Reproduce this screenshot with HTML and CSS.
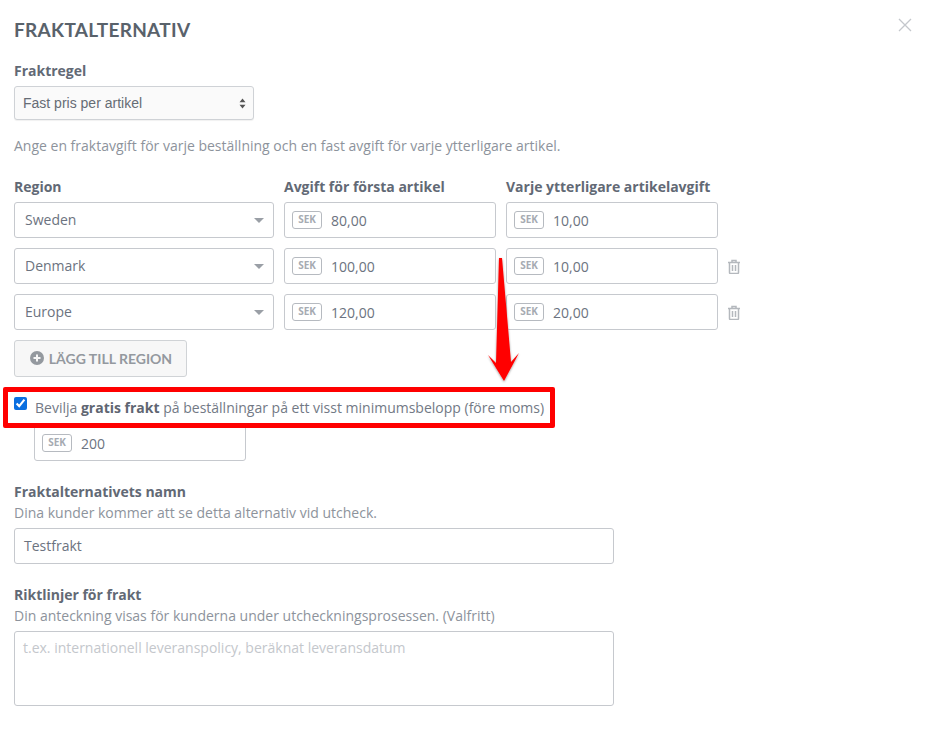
FILE: index.html
```html
<!DOCTYPE html>
<html lang="sv">
<head>
<meta charset="utf-8">
<title>Fraktalternativ</title>
<link rel="stylesheet" href="styles.css">
</head>
<body>
<main class="modal">
  <header class="head">
    <h1 class="title">FRAKTALTERNATIV</h1>
    <svg class="close" width="14" height="14" viewBox="0 0 14 14"><path d="M1 1l12 12M13 1L1 13" stroke="#c4c7cc" stroke-width="1.3" fill="none"/></svg>
  </header>

  <label class="label rule-label">Fraktregel</label>
  <div class="native-select">
    <span>Fast pris per artikel</span>
    <svg width="7" height="11" viewBox="0 0 7 11"><path d="M3.5 0.5L6.5 4.2H0.5zM3.5 10.5L0.5 6.8H6.5z" fill="#555"/></svg>
  </div>
  <p class="hint intro">Ange en fraktavgift för varje beställning och en fast avgift för varje ytterligare artikel.</p>

  <div class="grid">
    <div class="label">Region</div>
    <div class="label">Avgift för första artikel</div>
    <div class="label">Varje ytterligare artikelavgift</div>
    <div></div>

    <div class="dropdown"><span>Sweden</span><i class="caret"></i></div>
    <div class="money"><b class="sek">SEK</b><span>80,00</span></div>
    <div class="money"><b class="sek">SEK</b><span>10,00</span></div>
    <div></div>

    <div class="dropdown"><span>Denmark</span><i class="caret"></i></div>
    <div class="money"><b class="sek">SEK</b><span>100,00</span></div>
    <div class="money"><b class="sek">SEK</b><span>10,00</span></div>
    <svg class="trash" width="14" height="15" viewBox="0 0 14 15"><path d="M1 3.500h12M5 3.500V1.500h4v2M2.500 3.500v10a1 1 0 0 0 1 1h7a1 1 0 0 0 1-1v-10M5.500 6v6M8.500 6v6" stroke="#b4b8bd" stroke-width="1.500" fill="none"/></svg>

    <div class="dropdown"><span>Europe</span><i class="caret"></i></div>
    <div class="money"><b class="sek">SEK</b><span>120,00</span></div>
    <div class="money"><b class="sek">SEK</b><span>20,00</span></div>
    <svg class="trash" width="14" height="15" viewBox="0 0 14 15"><path d="M1 3.500h12M5 3.500V1.500h4v2M2.500 3.500v10a1 1 0 0 0 1 1h7a1 1 0 0 0 1-1v-10M5.500 6v6M8.500 6v6" stroke="#b4b8bd" stroke-width="1.500" fill="none"/></svg>
  </div>

  <button class="add" type="button">
    <svg width="14" height="14" viewBox="0 0 14 14"><circle cx="7" cy="7" r="7" fill="#94999f"/><path d="M7 3.500v7M3.500 7h7" stroke="#f7f7f7" stroke-width="2"/></svg>
    LÄGG TILL REGION
  </button>

  <label class="check-row">
    <input type="checkbox" checked>
    <span>Bevilja <b>gratis frakt</b> på beställningar på ett visst minimumsbelopp (före moms)</span>
  </label>
  <div class="money min"><b class="sek">SEK</b><span>200</span></div>

  <div class="label name-label">Fraktalternativets namn</div>
  <p class="hint sub">Dina kunder kommer att se detta alternativ vid utcheck.</p>
  <div class="text-input">Testfrakt</div>

  <div class="label notes-label">Riktlinjer för frakt</div>
  <p class="hint sub">Din anteckning visas för kunderna under utcheckningsprosessen. (Valfritt)</p>
  <div class="textarea">t.ex. internationell leveranspolicy, beräknat leveransdatum</div>
</main>

<div class="red-box"></div>
<svg class="arrow" width="44" height="130" viewBox="0 0 44 130">
  <defs><filter id="s" x="-30%" y="-5%" width="160%" height="115%"><feDropShadow dx="0" dy="1" stdDeviation="1.200" flood-color="#000" flood-opacity=".4"/></filter></defs>
  <path d="M15 2L18 2L27 106L35 97L20 125L4 99L12 107Z" fill="#f00" filter="url(#s)"/>
</svg>
</body>
</html>
```
FILE: styles.css
```css
* { box-sizing: border-box; }
html, body { margin: 0; height: 100%; overflow: hidden; background: #fff; }
body { font-family: "Open Sans", sans-serif; font-size: 14px; color: #6c7380; position: relative; }
.modal { padding: 0 14px; display: flex; flex-direction: column; align-items: flex-start; }
.head { width: 100%; height: 59px; display: flex; justify-content: space-between; align-items: flex-start; }
.title { margin: 18px 0 0; font: 700 19px/23px Lato, sans-serif; letter-spacing: .3px; color: #59626b; }
.close { margin: 18px 1px 0 0; }
.label { font-weight: 700; font-size: 14px; line-height: 19px; letter-spacing: -.01px; color: #626975; }
.rule-label { margin-top: 2px; }
.native-select { margin-top: 6px; width: 240px; height: 34px; border: 1px solid #cfd2d6; border-radius: 3px; background: #fafafa; padding: 0 8px; display: flex; align-items: center; justify-content: space-between; font: 14px "Liberation Sans", sans-serif; color: #666c75; box-shadow: 0 1px 1px rgba(0,0,0,.06); }
.native-select svg { margin-right: -1px; }
.hint { margin: 0; color: #8d939c; font-size: 14px; line-height: 19px; }
.intro { margin-top: 16px; }
.grid { margin-top: 22px; display: grid; grid-template-columns: 260px 212px 212px 14px; column-gap: 10px; row-gap: 10px; align-items: center; }
.grid > .label { margin-bottom: -4px; }
.dropdown, .money, .text-input, .textarea { border: 1px solid #c6c9ce; border-radius: 3px; background: #fff; }
.dropdown { height: 36px; padding: 0 10px 2px; display: flex; align-items: center; justify-content: space-between; }
.caret { width: 0; height: 0; border: 5.500px solid transparent; border-top: 5.500px solid #9a9fa6; border-bottom: 0; margin: 2px -1px 0 0; }
.money { height: 36px; display: flex; align-items: center; padding: 0 7px; gap: 9px; font-size: 14px; color: #6c7380; }
.sek { border: 1px solid #b6bac0; border-radius: 3px; width: 30px; height: 18px; font-size: 10px; line-height: 15px; color: #a6abb2; text-align: center; font-weight: 700; }
.trash { margin-left: -1px; margin-top: 1px; }
.add { margin-top: 10px; width: 173px; height: 37px; border: 1px solid #d0d3d6; border-radius: 3px; background: #f7f7f7; padding: 0 0 1px 1px; display: flex; align-items: center; justify-content: center; gap: 5px; font: 700 14px Lato, sans-serif; color: #94999f; }
.check-row { margin-top: 21px; display: flex; align-items: flex-start; gap: 7px; height: 19px; line-height: 19px; color: #727985; }
.check-row input { width: 13px; height: 13px; margin: -1px 1px 0 0; accent-color: #0a6fe0; }
.check-row b { color: #5f6672; }
.min { margin: 8px 0 0 20px; width: 212px; }
.name-label { margin-top: 21px; }
.sub { margin-top: 2px; }
.text-input { margin-top: 6px; width: 600px; height: 36px; padding: 0 9px 2px; display: flex; align-items: center; }
.notes-label { margin-top: 21px; }
.textarea { margin-top: 6px; width: 600px; height: 75px; padding: 6px 8px; color: #c4c7cc; }
.red-box { position: absolute; left: 3px; top: 387px; width: 552px; height: 41px; border: 5px solid #f00; border-radius: 2px; }
.arrow { position: absolute; left: 484px; top: 256px; }
```
